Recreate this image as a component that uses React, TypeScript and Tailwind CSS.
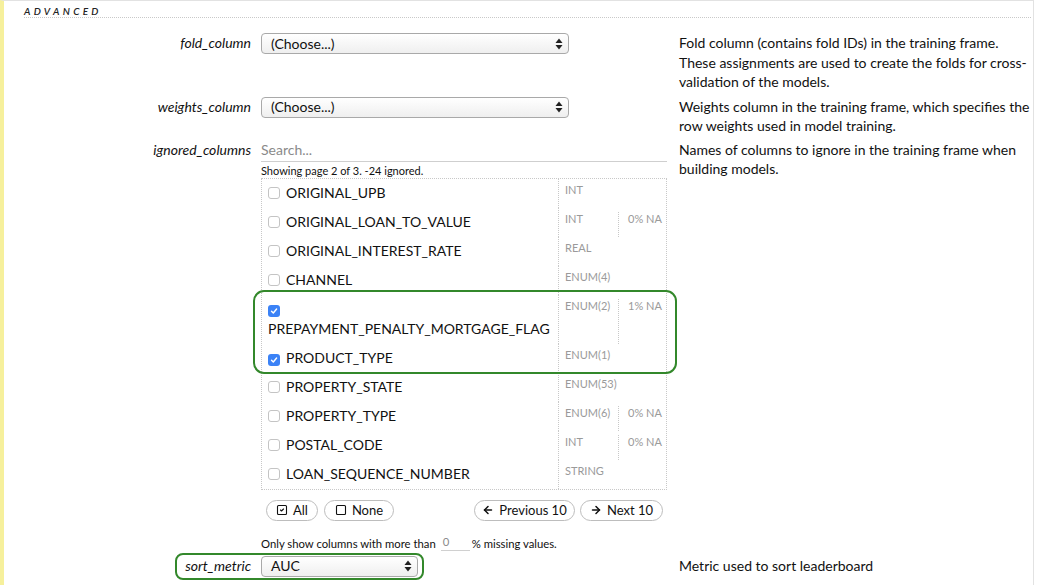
import { ArrowLeft, ArrowRight, Square, SquareCheck } from 'lucide-react';

type Col = { name: string; type: string; na?: string; checked?: boolean };

const before: Col[] = [
  { name: 'ORIGINAL_UPB', type: 'INT' },
  { name: 'ORIGINAL_LOAN_TO_VALUE', type: 'INT', na: '0% NA' },
  { name: 'ORIGINAL_INTEREST_RATE', type: 'REAL' },
  { name: 'CHANNEL', type: 'ENUM(4)' },
];

const picked: Col[] = [
  { name: 'PREPAYMENT_PENALTY_MORTGAGE_FLAG', type: 'ENUM(2)', na: '1% NA', checked: true },
  { name: 'PRODUCT_TYPE', type: 'ENUM(1)', checked: true },
];

const after: Col[] = [
  { name: 'PROPERTY_STATE', type: 'ENUM(53)' },
  { name: 'PROPERTY_TYPE', type: 'ENUM(6)', na: '0% NA' },
  { name: 'POSTAL_CODE', type: 'INT', na: '0% NA' },
  { name: 'LOAN_SEQUENCE_NUMBER', type: 'STRING' },
];

function Arrows() {
  return (
    <svg width="8" height="12" viewBox="0 0 8 12" className="text-[#222]">
      <path d="M4 0.5 L7.5 5 H0.5 Z" fill="currentColor" />
      <path d="M4 11.5 L7.5 7 H0.5 Z" fill="currentColor" />
    </svg>
  );
}

function Select({ value, width }: { value: string; width: string }) {
  return (
    <div
      className={`${width} h-[21px] flex items-center justify-between pl-[9px] pr-[5px] rounded-[4px] border border-[#a9a9a9] bg-gradient-to-b from-white to-[#efefef] text-[14px] leading-none text-[#111]`}
    >
      <span>{value}</span>
      <Arrows />
    </div>
  );
}

function Check({ on }: { on?: boolean }) {
  if (on) {
    return (
      <span className="inline-flex items-center justify-center align-[-1px] w-[12px] h-[12px] rounded-[3px] bg-[#3b82f6] mr-[6px]">
        <svg width="8" height="8" viewBox="0 0 8 8">
          <path d="M1.5 4.2 L3.3 6 L6.6 2" fill="none" stroke="white" strokeWidth="1.4" strokeLinecap="round" strokeLinejoin="round" />
        </svg>
      </span>
    );
  }
  return (
    <span className="inline-block align-[-1px] w-[12px] h-[12px] rounded-[3px] border border-[#c4c4c4] bg-white mr-[6px]" />
  );
}

function Row({ c }: { c: Col }) {
  return (
    <div className="grid grid-cols-[296px_60px_49px]">
      <div className="pl-[6px] py-[4.5px] text-[14px] leading-[20px] text-[#111]">
        <Check on={c.checked} />
        <span>{c.name}</span>
      </div>
      <div className="border-l border-dotted border-[#c8c8c8] pl-[6px] pt-[4px] text-[11px] leading-[14px] text-[#9a9a9a]">
        {c.type}
      </div>
      <div className="flex flex-col pt-[4px]">
        {c.na && (
          <div className="flex-1 border-l border-dotted border-[#c8c8c8] pl-[9px] text-[11px] leading-[14px] text-[#9a9a9a]">
            {c.na}
          </div>
        )}
      </div>
    </div>
  );
}

function Btn({ w, children }: { w: string; children: React.ReactNode }) {
  return (
    <div className={`${w} h-[21px] flex items-center justify-center gap-[5px] rounded-full border border-[#bdbdbd] bg-white text-[13px] leading-none text-[#111]`}>
      {children}
    </div>
  );
}

export default function App() {
  return (
    <div className="w-[1050px] h-[585px] overflow-hidden bg-white" style={{ fontFamily: 'Lato, "Open Sans", sans-serif' }}>
      <div className="h-[600px] mr-[16px] border-l-4 border-l-[#f6f09c] border-t border-r border-t-[#e2e2e2] border-r-[#e2e2e2] pl-[20px] pr-[2px]">
        <div className="pt-[5px] pb-[1px] border-b border-dotted border-[#c9c9c9] text-[10px] leading-[10px] italic font-semibold tracking-[3.3px] text-[#222]">
          ADVANCED
        </div>

        <div className="flex mt-[15px]">
          <div className="w-[227px] text-right italic text-[14px] leading-[20px] text-[#111]">fold_column</div>
          <div className="w-[406px] ml-[10px]">
            <Select value="(Choose...)" width="w-[308px]" />
          </div>
          <div className="w-[352px] ml-[12px] text-[14px] leading-[19.5px] text-[#111]">
            Fold column (contains fold IDs) in the training frame. These assignments are used to create the folds for cross-validation of the models.
          </div>
        </div>

        <div className="flex mt-[5px]">
          <div className="w-[227px] text-right italic text-[14px] leading-[20px] text-[#111]">weights_column</div>
          <div className="w-[406px] ml-[10px]">
            <Select value="(Choose...)" width="w-[308px]" />
          </div>
          <div className="w-[352px] ml-[12px] text-[14px] leading-[19.5px] text-[#111]">
            Weights column in the training frame, which specifies the row weights used in model training.
          </div>
        </div>

        <div className="flex mt-[4px]">
          <div className="w-[227px] text-right italic text-[14px] leading-[20px] text-[#111]">ignored_columns</div>
          <div className="w-[406px] ml-[10px]">
            <div className="h-[22px] border-b border-[#cfcfcf] text-[14px] leading-[20px] text-[#8a8a8a]">Search...</div>
            <div className="mt-[2px] text-[11px] leading-[14px] text-[#111]">Showing page 2 of 3. -24 ignored.</div>
            <div className="border border-dotted border-[#c8c8c8]">
              {before.map((c) => (
                <Row key={c.name} c={c} />
              ))}
              <div className="relative">
                {picked.map((c) => (
                  <Row key={c.name} c={c} />
                ))}
                <div className="absolute left-[-9px] right-[-11px] top-[-5px] bottom-[-1px] rounded-[11px] border-[2.5px] border-[#33882b] pointer-events-none" />
              </div>
              {after.map((c) => (
                <Row key={c.name} c={c} />
              ))}
            </div>
            <div className="flex mt-[10px] pl-[5px] pr-[4px]">
              <Btn w="w-[52px]">
                <SquareCheck size={12} strokeWidth={2.2} />
                <span>All</span>
              </Btn>
              <div className="ml-[6px]">
                <Btn w="w-[70px]">
                  <Square size={12} strokeWidth={2.2} />
                  <span>None</span>
                </Btn>
              </div>
              <div className="ml-auto flex gap-[5px]">
                <Btn w="w-[101px]">
                  <ArrowLeft size={12} strokeWidth={3} />
                  <span>Previous 10</span>
                </Btn>
                <Btn w="w-[83px]">
                  <ArrowRight size={12} strokeWidth={3} />
                  <span>Next 10</span>
                </Btn>
              </div>
            </div>
            <div className="mt-[14px] flex items-end text-[11.3px] leading-[14px] text-[#111]">
              <span>Only show columns with more than</span>
              <span className="ml-[5px] w-[29px] border-b border-[#d0d0d0] pl-[2px] pb-[1px] text-[#8a8a8a]">0</span>
              <span className="ml-[2px]">% missing values.</span>
            </div>
          </div>
          <div className="w-[352px] ml-[12px] text-[14px] leading-[19.5px] text-[#111]">
            Names of columns to ignore in the training frame when building models.
          </div>
        </div>

        <div className="relative flex mt-[5px]">
          <div className="w-[227px] text-right italic text-[14px] leading-[20px] text-[#111]">sort_metric</div>
          <div className="w-[406px] ml-[10px]">
            <Select value="AUC" width="w-[157px]" />
          </div>
          <div className="w-[352px] ml-[12px] text-[14px] leading-[20px] text-[#111]">Metric used to sort leaderboard</div>
          <div className="absolute left-[151px] top-[-3px] w-[249px] h-[27px] rounded-[8px] border-[2.5px] border-[#33882b] pointer-events-none" />
        </div>
      </div>
    </div>
  );
}
